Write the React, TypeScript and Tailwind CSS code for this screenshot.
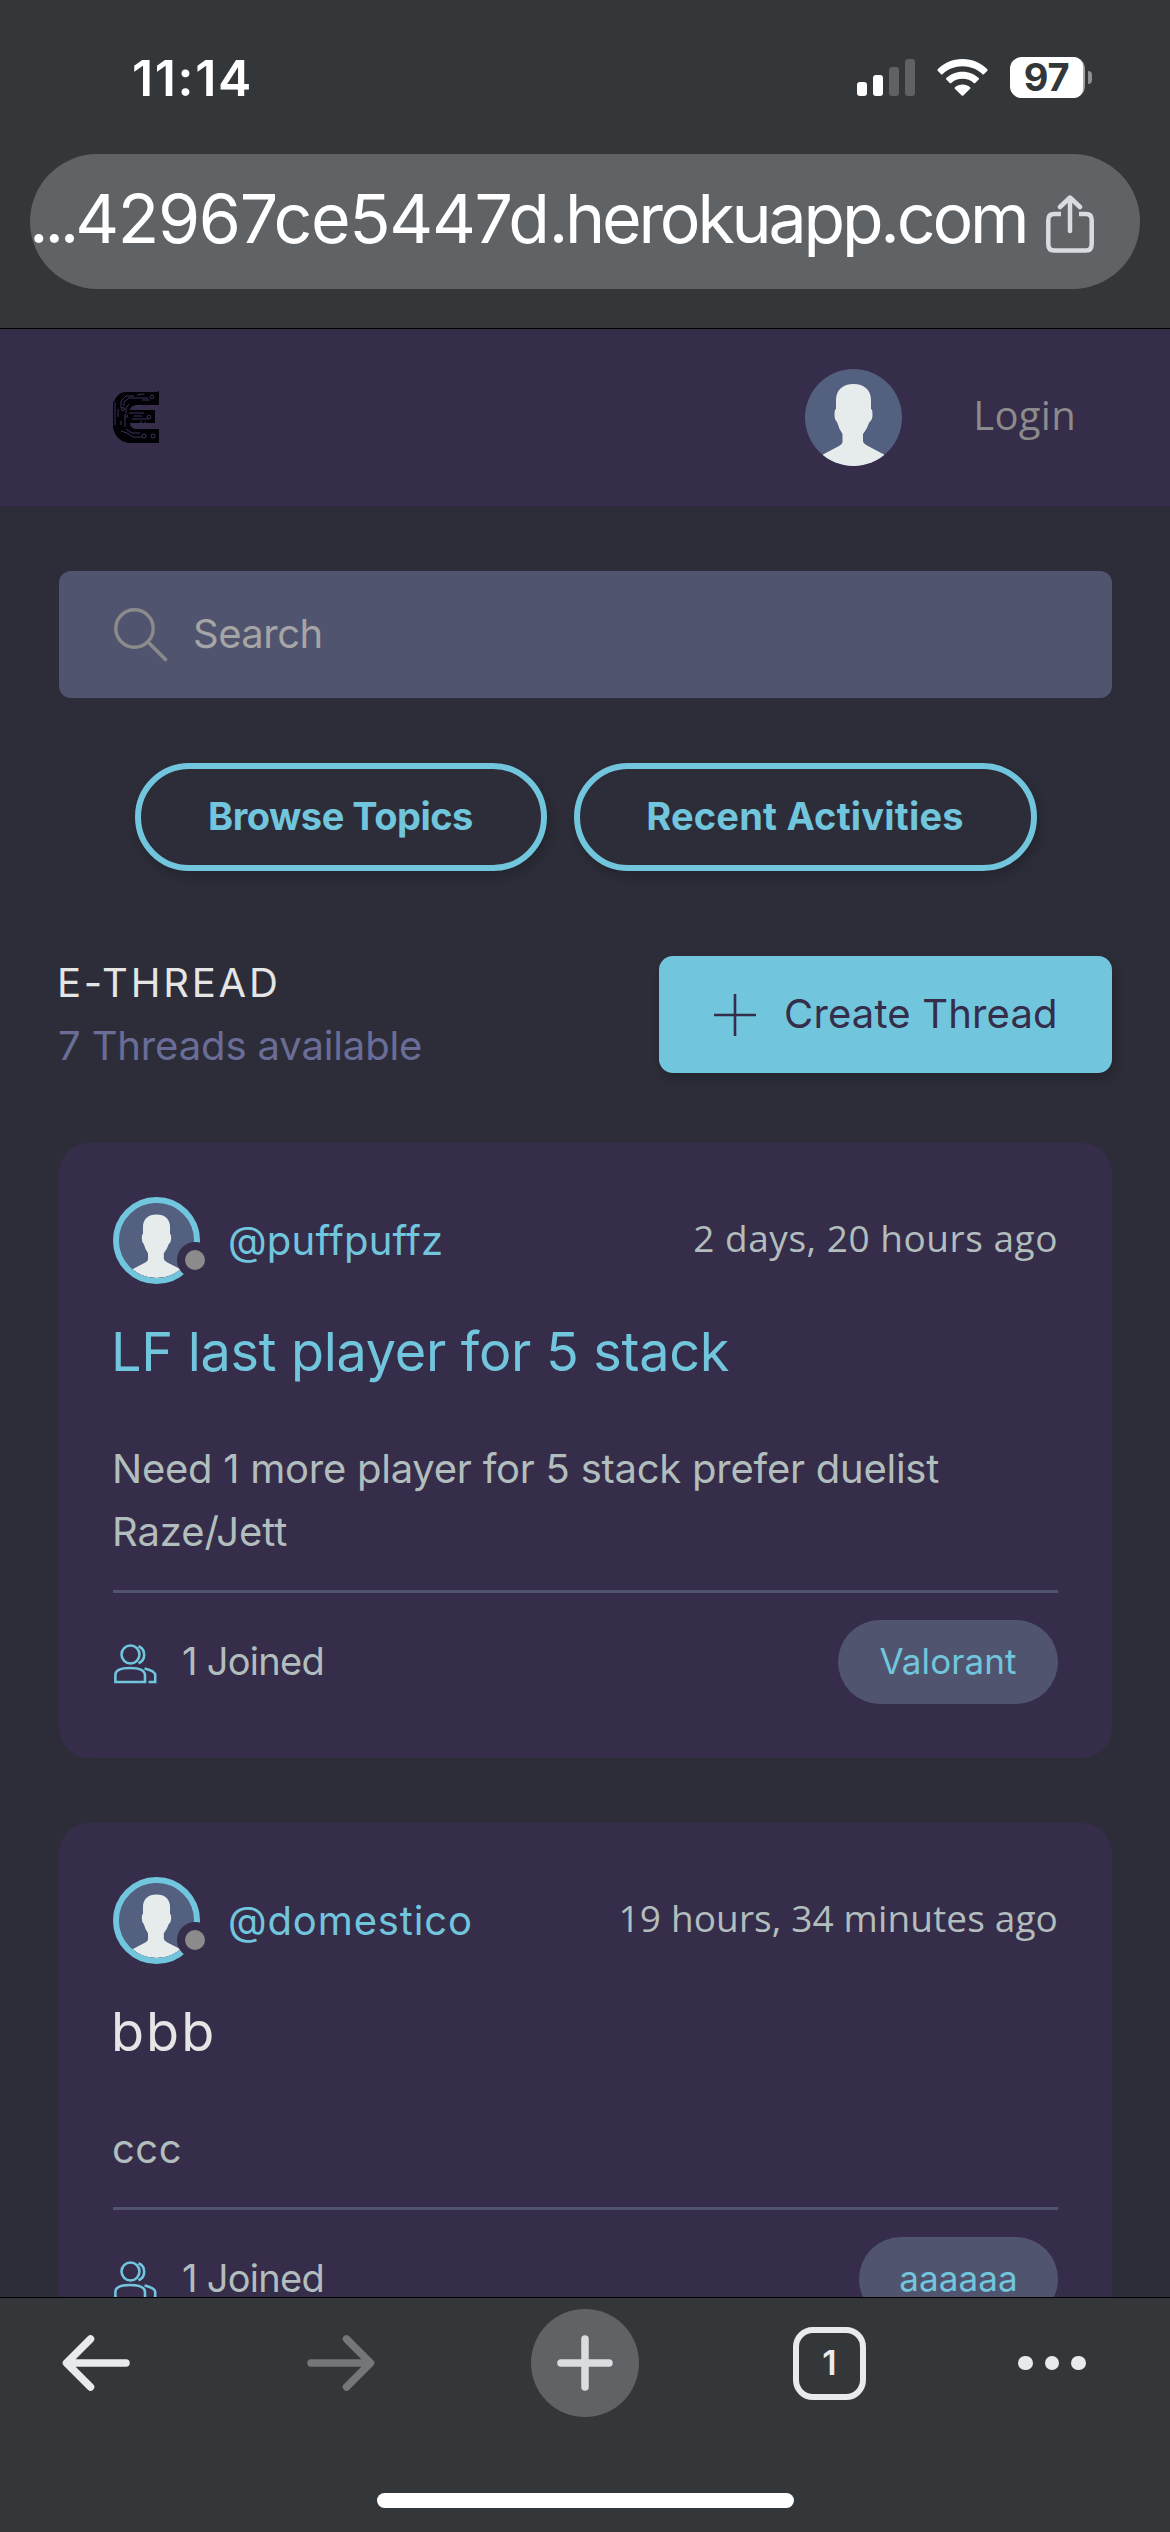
import type { ReactNode } from "react";

type Thread = {
  user: string;
  time: string;
  title: string;
  titleClass: string;
  titleTracking: string;
  timeTracking: string;
  userTracking: string;
  body: ReactNode;
  joined: string;
  topic: string;
  topicClass: string;
};

const threads: Thread[] = [
  {
    user: "@puffpuffz",
    userTracking: "tracking-[0.22px]",
    time: "2 days, 20 hours ago",
    timeTracking: "tracking-[0.53px]",
    title: "LF last player for 5 stack",
    titleClass: "text-[#71c6dd]",
    titleTracking: "tracking-[-0.3px]",
    body: (
      <>
        <span className="tracking-[-0.25px]">Need 1 more player for 5 stack prefer duelist</span>
        <br />
        <span className="tracking-[-0.1px]">Raze/Jett</span>
      </>
    ),
    joined: "1 Joined",
    topic: "Valorant",
    topicClass: "w-[220px] tracking-[0.1px]",
  },
  {
    user: "@domestico",
    userTracking: "tracking-[0.87px]",
    time: "19 hours, 34 minutes ago",
    timeTracking: "tracking-[0.12px]",
    title: "bbb",
    titleClass: "text-[#e5e5e5]",
    titleTracking: "tracking-[2px]",
    body: <span className="tracking-[0.5px]">ccc</span>,
    joined: "1 Joined",
    topic: "aaaaaa",
    topicClass: "w-[199px] tracking-[0.1px]",
  },
];

function Silhouette({ className }: { className: string }) {
  return (
    <svg viewBox="0 0 97 97" className={className}>
      <rect width="97" height="97" fill="#546080" />
      <path
        fill="#e6eceb"
        d="M48.500 15C38 15 31 21 31 31V40Q29.500 40 29.500 46Q29.500 51 32 53Q34 60 37.500 65V73Q37.500 75 34 77L18 85.500V97H79V85.500L62 76.500Q58 74 58 72V65Q62 60 64.500 53Q67.500 51 67.500 46Q67.500 40 66 40V31C66 21 59 15 48.500 15Z"
      />
    </svg>
  );
}

function Logo() {
  return (
    <svg viewBox="0 0 47 52" className="mb-[2px] h-[52px] w-[47px]">
      <path
        fill="#020106"
        d="M47 0V14H24Q18 15 18 19H43V32H18Q18 37 23 38H47V52H16Q4 50 1 37V11Q3 10 3 8Q7 1 14 1H45Z"
      />
      <g fill="none" stroke="#3d3357" strokeWidth="1">
        <path d="M9 17V10L14 5H22M12 15V11L17 7H36M6 18V26M9 30V34M14 22V17L17 13M13 27V36M17 22H32M9 40L15 42L21 46H30M14 38L20 42H28M25 4L32 3M30 9H38M3 11V34M22 25H30M20 28H36M24 36L30 30M28 36L34 31M25 17L29 14" />
        <circle cx="40" cy="6" r="1.800" />
        <circle cx="11" cy="18" r="1.500" />
        <circle cx="14" cy="25" r="1.500" />
        <circle cx="37" cy="26" r="1.800" />
        <circle cx="32" cy="45" r="2" />
        <circle cx="41" cy="45" r="2" />
      </g>
    </svg>
  );
}

function StatusBar() {
  return (
    <div className="flex h-[154px] items-start justify-between pl-[132px] pr-[78px] text-white">
      <div className="mt-[48px] text-[50px] font-semibold leading-[60px] tracking-[1.66px]">11:14</div>
      <div className="mt-[57px] flex h-[41px] items-center">
        <svg viewBox="0 0 58 37" className="h-[37px] w-[58px]">
          <rect x="0" y="23" width="10" height="14" rx="3" fill="#fff" />
          <rect x="16" y="16" width="10" height="21" rx="3" fill="#fff" />
          <rect x="32" y="8" width="10" height="29" rx="3" fill="#5f6163" />
          <rect x="48" y="0" width="10" height="37" rx="3" fill="#5f6163" />
        </svg>
        <svg viewBox="0 0 51 37" className="ml-[22px] h-[37px] w-[51px]">
          <g fill="#fff">
            <path d="M25.500 0C35.500 0 44 4 50.300 10.200Q51 11 50.300 11.800L46.900 15.200Q46.200 15.800 45.500 15.200C40 10 33 7.300 25.500 7.300S11 10 5.500 15.200Q4.800 15.800 4.100 15.200L.7 11.800Q0 11 .7 10.200C7 4 15.500 0 25.500 0Z" />
            <path d="M25.500 12.800C32 12.800 37.500 15.200 41.700 19.100Q42.400 19.800 41.700 20.500L38.200 24Q37.500 24.700 36.700 24C33.600 21.200 29.800 19.800 25.500 19.800S17.400 21.200 14.300 24Q13.500 24.700 12.800 24L9.300 20.500Q8.600 19.800 9.300 19.100C13.500 15.200 19 12.800 25.500 12.800Z" />
            <path d="M25.500 25.600C28.400 25.600 31 26.600 33 28.200Q33.800 29 33.100 29.700L26.300 36.500Q25.500 37.200 24.700 36.500L17.900 29.700Q17.200 29 18 28.200C20 26.600 22.600 25.600 25.500 25.600Z" />
          </g>
        </svg>
        <div className="ml-[22px] h-[41px] w-[75px] rounded-[12px] bg-[#a0a2a3]">
          <div className="flex h-[41px] w-[73px] items-center justify-center rounded-l-[12px] rounded-r-[9px] bg-white text-[38px] font-bold leading-[41px] tracking-[-0.24px] text-[#343739]">
            97
          </div>
        </div>
        <div className="ml-[3px] h-[13px] w-[4px] rounded-r-full bg-[#8d8f90]" />
      </div>
    </div>
  );
}

function AddressBar() {
  return (
    <div className="mx-[30px] flex h-[135px] items-center rounded-full bg-[#5f6366]">
      <div className="-ml-px mb-[7px] w-[1017px] whitespace-nowrap text-[68px] leading-[80px] text-white">
        <span className="tracking-[-4.2px]">...</span>
        <span className="tracking-[-1.3px]">42967ce5447d</span>
        <span className="tracking-[-3.2px]">.herokuapp.com</span>
      </div>
      <svg viewBox="0 0 48 58" className="mt-[5px] h-[58px] w-[48px]" fill="none" stroke="#d9dbe0" strokeWidth="4.500" strokeLinecap="round" strokeLinejoin="round">
        <path d="M15 19H8Q2.300 19 2.300 25V49Q2.300 55.500 8 55.500H40Q45.700 55.500 45.700 49V25Q45.700 19 40 19H33" strokeLinecap="butt" />
        <path d="M24 36V3M14 12L24 2.500L34 12" />
      </svg>
    </div>
  );
}

function ThreadCard({ t }: { t: Thread }) {
  return (
    <article className="h-[615px] shrink-0 rounded-[30px] bg-[#352d49] px-[54px] pt-[54px]">
      <div className="flex h-[87px] items-center justify-between">
        <div className="flex items-center">
          <div className="relative size-[87px]">
            <div className="size-[87px] overflow-hidden rounded-full border-[6px] border-[#71c6dd] bg-[#546080]">
              <Silhouette className="size-[75px] rounded-full" />
            </div>
            <div className="absolute left-[64px] top-[45px] size-[36px] rounded-full border-8 border-[#352d49] bg-[#8b8b8b]" />
          </div>
          <div className={`ml-[28px] text-[40px] leading-[60px] text-[#71c6dd] ${t.userTracking}`}>{t.user}</div>
        </div>
        <div className={`mb-[5px] font-['Open_Sans',sans-serif] text-[37px] leading-[56px] text-[#b2bdbd] ${t.timeTracking}`}>{t.time}</div>
      </div>
      <h3 className={`mt-[36px] -ml-[2px] text-[54px] leading-[64px] ${t.titleClass} ${t.titleTracking}`}>{t.title}</h3>
      <p className="mt-[53px] -ml-px whitespace-nowrap text-[40px] leading-[63px] text-[#b2bdbd]">{t.body}</p>
      <div className="mt-[27px] flex items-center justify-between border-t-[3px] border-[#51546e] pt-[27px]">
        <div className="flex items-center">
          <svg viewBox="0 0 43 40" className="mt-[3px] ml-px h-[40px] w-[43px]" fill="none" stroke="#71c6dd" strokeWidth="2.600">
            <circle cx="16.500" cy="10.500" r="9" />
            <path d="M24.500 2.200A9.200 9.200 0 0 1 24.500 19.200M1.400 38V31Q1.400 24 16 24T31 31V38ZM30.500 24.500Q41.200 27 41.200 31V38H34.500" />
          </svg>
          <span className="mb-[3px] ml-[25px] text-[38px] leading-[56px] tracking-[-0.7px] text-[#b2bdbd]">{t.joined}</span>
        </div>
        <div className={`flex h-[84px] items-center justify-center rounded-full bg-[#51546e] pb-px text-[35px] text-[#71c6dd] ${t.topicClass}`}>
          {t.topic}
        </div>
      </div>
    </article>
  );
}

function BottomBar() {
  return (
    <footer className="h-[235px] shrink-0 border-t border-black bg-[#343739]">
      <div className="mt-[11px] flex h-[108px] items-center gap-[136.500px] pl-[42px]">
        <div className="flex w-[108px] justify-center">
          <svg viewBox="0 0 68 56" className="h-[56px] w-[68px]" fill="none" stroke="#e8eaed" strokeWidth="7.500" strokeLinecap="round" strokeLinejoin="round">
            <path d="M64 28H5M28.500 4L4.500 28L28.500 52" />
          </svg>
        </div>
        <div className="flex w-[108px] justify-center">
          <svg viewBox="0 0 68 56" className="h-[56px] w-[68px]" fill="none" stroke="#757677" strokeWidth="7.500" strokeLinecap="round" strokeLinejoin="round">
            <path d="M4 28H63M39.500 4L63.500 28L39.500 52" />
          </svg>
        </div>
        <div className="flex size-[108px] items-center justify-center rounded-full bg-[#5f6366]">
          <svg viewBox="0 0 56 56" className="size-[56px]" fill="none" stroke="#dadce0" strokeWidth="7.500" strokeLinecap="round">
            <path d="M28 4V52M4 28H52" />
          </svg>
        </div>
        <div className="flex w-[108px] justify-center">
          <div className="flex size-[73px] items-center justify-center rounded-[20px] border-[6.500px] border-[#e8eaed] text-[34px] font-semibold leading-none text-[#e8eaed]">
            1
          </div>
        </div>
        <div className="-ml-[22px] flex w-[108px] justify-center gap-[12px]">
          <i className="size-[14.500px] rounded-full bg-[#e8eaed]" />
          <i className="size-[14.500px] rounded-full bg-[#e8eaed]" />
          <i className="size-[14.500px] rounded-full bg-[#e8eaed]" />
        </div>
      </div>
      <div className="mx-auto mt-[76px] h-[15px] w-[417px] rounded-full bg-white" />
    </footer>
  );
}

export default function App() {
  return (
    <div className="flex h-[2532px] w-[1170px] flex-col overflow-hidden bg-[#2d2d39] font-['Inter',sans-serif]">
      <div className="h-[329px] shrink-0 border-b border-black bg-[#343739]">
        <StatusBar />
        <AddressBar />
      </div>

      <div className="min-h-0 flex-1 overflow-hidden">
        <header className="flex h-[177px] items-center justify-between bg-[#352d49] pl-[112px] pr-[94px]">
          <Logo />
          <div className="flex items-center">
            <Silhouette className="size-[97px] rounded-full" />
            <span className="mb-[6px] ml-[71px] font-['Open_Sans',sans-serif] text-[40px] leading-[60px] tracking-[0.3px] text-[#8b8b8b]">Login</span>
          </div>
        </header>

        <main className="flex flex-col pl-[59px] pr-[58px]">
          <div className="mt-[65px] flex h-[127px] items-center rounded-[12px] bg-[#51546e] pl-[55px]">
            <svg viewBox="0 0 54 54" className="size-[54px]" fill="none" stroke="#8b8b8b" strokeWidth="3.400">
              <circle cx="20.500" cy="20.500" r="18.700" />
              <path d="M33.500 33.500L52.500 52.500" />
            </svg>
            <span className="mb-px ml-[25px] text-[40px] leading-[60px] tracking-[-0.52px] text-[#a5a5a5]">Search</span>
          </div>

          <div className="mt-[65px] flex justify-center gap-[27px] text-[38px] font-bold text-[#71c6dd]">
            <div className="flex h-[108px] w-[412px] items-center justify-center rounded-full border-[6px] border-[#71c6dd] pb-[2px] tracking-[-0.5px] shadow-[3px_6px_12px_rgba(0,0,0,0.2)]">
              Browse Topics
            </div>
            <div className="flex h-[108px] w-[463px] items-center justify-center rounded-full border-[6px] border-[#71c6dd] pb-[2px] tracking-[0.21px] shadow-[3px_6px_12px_rgba(0,0,0,0.2)]">
              Recent Activities
            </div>
          </div>

          <div className="mt-[85px] flex h-[117px] items-center justify-between">
            <div className="mb-px text-[40px] leading-[63px]">
              <div className="-ml-[2px] tracking-[2.800px] text-[#e5e5e5]">E-THREAD</div>
              <div className="-ml-px tracking-[-0.13px] text-[#696d97]">7 Threads available</div>
            </div>
            <div className="flex h-[117px] w-[453px] items-center rounded-[14px] bg-[#71c6dd] pl-[55px] text-[#352d49] shadow-[3px_6px_12px_rgba(0,0,0,0.2)]">
              <svg viewBox="0 0 42 42" className="size-[42px]" fill="none" stroke="#352d49" strokeWidth="2.600">
                <path d="M21 0V42M0 21H42" />
              </svg>
              <span className="mb-[2px] ml-[28px] text-[40px] tracking-[0.16px]">Create Thread</span>
            </div>
          </div>

          <div className="mt-[70px] flex flex-col gap-[65px]">
            {threads.map((t) => (
              <ThreadCard key={t.user} t={t} />
            ))}
          </div>
        </main>
      </div>

      <BottomBar />
    </div>
  );
}
